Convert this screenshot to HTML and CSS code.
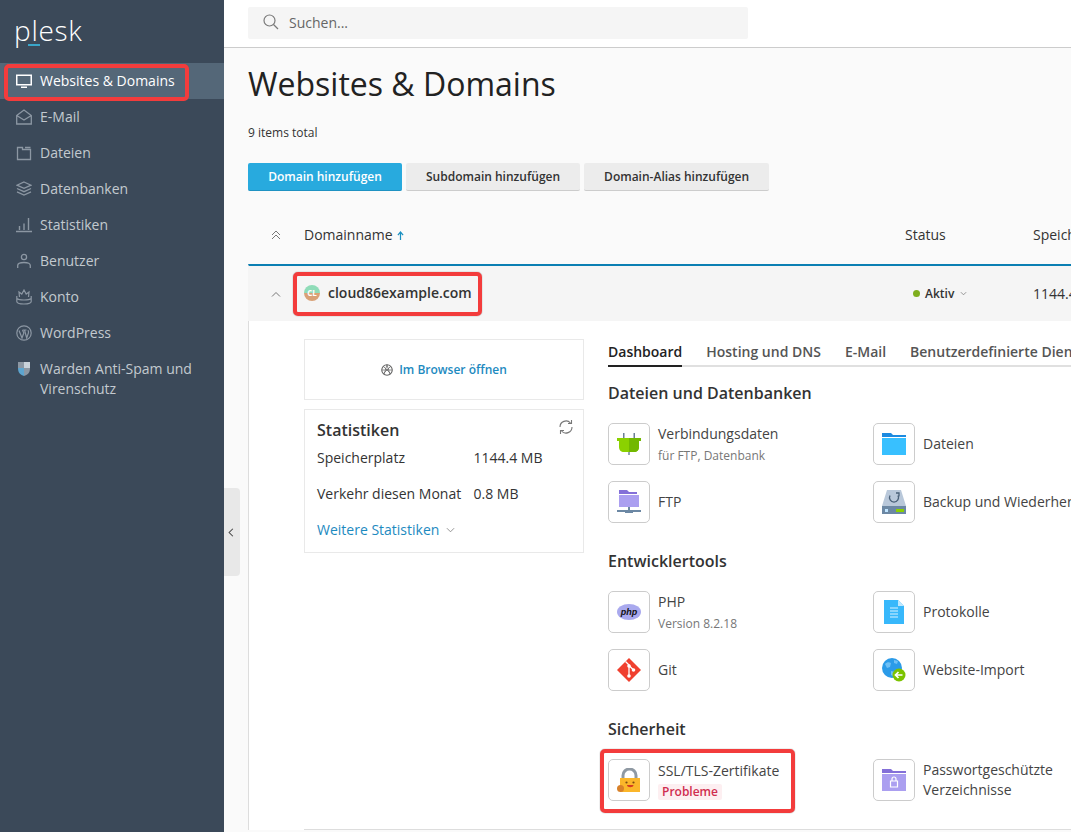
FILE: index.html
```html
<!DOCTYPE html>
<html lang="de">
<head>
<meta charset="utf-8">
<title>Websites &amp; Domains</title>
<link rel="stylesheet" href="styles.css">
</head>
<body>
<div class="app">
  <aside class="sidebar">
    <div class="logo"><span class="logo-p">p</span><span class="logo-l">l</span>esk</div>
    <nav class="nav">
      <a class="nav-item active"><svg class="nav-ico" viewBox="0 0 16 16"><path d="M0 1.500h16v11H0zM1.500 3v8h13V3zM5 13.500h6V15H5z" fill="#fff" fill-rule="evenodd"/></svg><span>Websites &amp; Domains</span></a>
      <a class="nav-item"><svg class="nav-ico" viewBox="0 0 16 16"><path d="M.7 6.500 8 1l7.300 5.500V15H.7zM.7 6.500 8 11l7.300-4.500" fill="none" stroke="#8c97a3" stroke-width="1.300"/></svg><span>E-Mail</span></a>
      <a class="nav-item"><svg class="nav-ico" viewBox="0 0 16 16"><path d="M1.500 2.500h5v2h8v10h-13zM9 2.500h5.500" fill="none" stroke="#8c97a3" stroke-width="1.300"/></svg><span>Dateien</span></a>
      <a class="nav-item"><svg class="nav-ico" viewBox="0 0 16 16"><path d="M8 1l7 3.200-7 3.200-7-3.200zM1 7.500l7 3.200 7-3.200M1 10.800 8 14l7-3.200" fill="none" stroke="#8c97a3" stroke-width="1.300"/></svg><span>Datenbanken</span></a>
      <a class="nav-item"><svg class="nav-ico" viewBox="0 0 16 16"><path d="M0 14.500h16M3.500 13V9M8 13V6.500M12.500 13V1" fill="none" stroke="#8c97a3" stroke-width="1.400"/></svg><span>Statistiken</span></a>
      <a class="nav-item"><svg class="nav-ico" viewBox="0 0 16 16"><circle cx="8" cy="4" r="2.600" fill="none" stroke="#8c97a3" stroke-width="1.300"/><path d="M1.700 15v-2.500c0-2 2-3 6.300-3s6.300 1 6.300 3V15" fill="none" stroke="#8c97a3" stroke-width="1.300"/></svg><span>Benutzer</span></a>
      <a class="nav-item"><svg class="nav-ico" viewBox="0 0 16 16"><path d="M3.500 8 3 3l2.800 2L8 1l2.200 4L13 3l-.5 5M.8 7v5.500C.8 14 3.500 15 8 15s7.200-1 7.200-2.500V7M.8 9.500C3 11.500 13 11.500 15.200 9.500" fill="none" stroke="#8c97a3" stroke-width="1.200"/></svg><span>Konto</span></a>
      <a class="nav-item"><svg class="nav-ico" viewBox="0 0 16 16"><circle cx="8" cy="8" r="7.200" fill="none" stroke="#8c97a3" stroke-width="1.200"/><path d="M3 5.500l3 7.500 1.800-5L6.500 5M6.500 5h4M8.500 5l2.200 8 1.700-5c.4-1 0-2-.4-2.800" fill="none" stroke="#8c97a3" stroke-width="1.200"/></svg><span>WordPress</span></a>
      <a class="nav-item two"><svg class="nav-ico shield" viewBox="0 0 16 16"><path d="M2 1h6v6H2z" fill="#8c97a3"/><path d="M8 1h6v6H8z" fill="#c9d2da"/><path d="M2 7h6v8C4.500 14 2 12 2 7z" fill="#5da5cf"/><path d="M8 7h6c0 5-2.500 7-6 8z" fill="#8c97a3"/></svg><span>Warden Anti-Spam und Virenschutz</span></a>
    </nav>
  </aside>

  <div class="main">
    <header class="topbar">
      <div class="search">
        <svg class="search-ico" viewBox="0 0 16 16"><circle cx="6.500" cy="6.500" r="5.500" fill="none" stroke="#7a7a7a" stroke-width="1.200"/><path d="M10.500 10.500 15 15" stroke="#7a7a7a" stroke-width="1.300"/></svg>
        <span>Suchen...</span>
      </div>
    </header>

    <button class="collapse" type="button" aria-label="Einklappen"><svg viewBox="0 0 8 12" width="6" height="9"><path d="M6.500 1 1.500 6l5 5" fill="none" stroke="#444" stroke-width="1.400"/></svg></button>

    <main class="page">
      <h1 class="title">Websites &amp; Domains</h1>
      <p class="count">9 items total</p>
      <div class="actions">
        <button class="btn primary" type="button">Domain hinzufügen</button>
        <button class="btn" type="button">Subdomain hinzufügen</button>
        <button class="btn" type="button">Domain-Alias hinzufügen</button>
      </div>

      <div class="thead">
        <span class="col-toggle"><svg viewBox="0 0 10 10" width="10" height="10"><path d="M1 5l4-4 4 4M1 9l4-4 4 4" fill="none" stroke="#777" stroke-width="1"/></svg></span>
        <span class="col-name">Domainname <svg class="sort" viewBox="0 0 8 10" width="7" height="9"><path d="M4 10V2M1 4.500 4 1l3 3.500" fill="none" stroke="#1a8fc0" stroke-width="1.400"/></svg></span>
        <span class="col-status">Status</span>
        <span class="col-size">Speicherplatz</span>
      </div>

      <div class="domain">
        <div class="drow">
          <span class="col-toggle"><svg viewBox="0 0 10 6" width="10" height="6"><path d="M1 5.500 5 1.500l4 4" fill="none" stroke="#777" stroke-width="1"/></svg></span>
          <span class="col-name dname"><span class="favicon">CL</span><b>cloud86example.com</b></span>
          <span class="col-status active-status"><i class="dot"></i><b>Aktiv</b><svg viewBox="0 0 8 5" width="7" height="5"><path d="M1 1l3 3 3-3" fill="none" stroke="#888" stroke-width="1"/></svg></span>
          <span class="col-size row-size">1144.4 MB</span>
        </div>

        <div class="dbody">
          <div class="left">
            <div class="card open"><svg viewBox="0 0 16 16" width="12" height="12"><circle cx="8" cy="8" r="7" fill="none" stroke="#666" stroke-width="1.500"/><path d="M3 3l10 10M13 3 3 13M8 1 4 14M8 1l4 13M1.500 8h13" stroke="#666" stroke-width="1"/></svg><a>Im Browser öffnen</a></div>
            <div class="card stats">
              <svg class="refresh" viewBox="0 0 16 16" width="16" height="16"><path d="M2 8a6 6 0 0 1 10.500-4M14 8a6 6 0 0 1-10.500 4" fill="none" stroke="#777" stroke-width="1.100"/><path d="M13.500 1v3.500H10M2.500 15v-3.500H6" fill="none" stroke="#777" stroke-width="1.100"/></svg>
              <h3>Statistiken</h3>
              <dl class="stat-list">
                <dt>Speicherplatz</dt><dd>1144.4 MB</dd>
                <dt>Verkehr diesen Monat</dt><dd>0.8 MB</dd>
              </dl>
              <a class="more">Weitere Statistiken <svg viewBox="0 0 10 6" width="9" height="6"><path d="M1 1l4 4 4-4" fill="none" stroke="#888" stroke-width="1"/></svg></a>
            </div>
          </div>

          <div class="right">
            <div class="tabs">
              <span class="tab on">Dashboard</span>
              <span class="tab">Hosting und DNS</span>
              <span class="tab">E-Mail</span>
              <span class="tab">Benutzerdefinierte Dienste</span>
            </div>

            <h2 class="sec first">Dateien und Datenbanken</h2>
            <div class="grid">
              <div class="tool"><span class="ibox"><svg viewBox="0 0 24 24" width="24" height="24"><path d="M6 1h1.500v5H6zM16.500 1H18v5h-1.500zM11.300 19h1.400v4h-1.400z" fill="#6c7f96"/><path d="M0 6h24v3H22v6c0 3-2 5-5 5H7c-3 0-5-2-5-5V9H0z" fill="#8bd100"/><path d="M12 6h12v3h-2v6c0 3-2 5-5 5h-5z" fill="#72b800"/></svg></span><div class="tlabel sub"><span>Verbindungsdaten</span><small>für FTP, Datenbank</small></div></div>
              <div class="tool"><span class="ibox"><svg viewBox="0 0 24 24" width="24" height="24"><path d="M0 1h9l2 2h13v2H0z" fill="#1c8ae0"/><path d="M0 6h24v17H0z" fill="#38c0ff"/></svg></span><div class="tlabel"><span>Dateien</span></div></div>
              <div class="tool"><span class="ibox"><svg viewBox="0 0 24 24" width="24" height="24"><path d="M2 0h8l2 2h8v2H2z" fill="#8470d8"/><path d="M2 5h20v12H2z" fill="#ab9ff0"/><path d="M11 17h2v3h-2zM0 20h24v2H0z" fill="#6c88a4"/><path d="M8 20h8v3H8z" fill="#6c88a4"/></svg></span><div class="tlabel"><span>FTP</span></div></div>
              <div class="tool"><span class="ibox"><svg viewBox="0 0 24 24" width="24" height="24"><path d="M5 0h14l5 16H0z" fill="#b9c8da"/><path d="M0 16h24v8H0z" fill="#6c88a4"/><path d="M3 19h3v3H3z" fill="#bfe4ff"/><path d="M14 19h8v3h-8z" fill="#8bd100"/><path d="M8 5.500a4.500 4.500 0 1 0 8 0M14 3h3v3.500" fill="none" stroke="#4a6078" stroke-width="1.300"/></svg></span><div class="tlabel"><span class="nowrap">Backup und Wiederherstellung</span></div></div>
            </div>

            <h2 class="sec">Entwicklertools</h2>
            <div class="grid">
              <div class="tool"><span class="ibox"><svg class="php" viewBox="0 0 24 16" width="24" height="16"><ellipse cx="12" cy="8" rx="12" ry="8" fill="#a9a9ee"/><text x="12" y="11" text-anchor="middle">php</text></svg></span><div class="tlabel sub"><span>PHP</span><small>Version 8.2.18</small></div></div>
              <div class="tool"><span class="ibox"><svg viewBox="0 0 20 24" width="20" height="24"><path d="M0 0h14l6 6v18H0z" fill="#38b8fb"/><path d="M14 0l6 6h-6z" fill="#bfe8ff"/><path d="M6 8h8M6 11h8M6 14h8M6 17h8" stroke="#d8f2ff" stroke-width="1"/></svg></span><div class="tlabel"><span>Protokolle</span></div></div>
              <div class="tool"><span class="ibox"><svg viewBox="0 0 24 24" width="24" height="24"><path d="M12 0 24 12 12 24 0 12z" fill="#f0402f"/><path d="M8.500 3.500l4 4M12 7v11M12 7.500l4.500 4.500" stroke="#fff" stroke-width="1.300"/><circle cx="12" cy="8" r="1.800" fill="#fff"/><circle cx="12" cy="18" r="1.800" fill="#fff"/><circle cx="16.500" cy="12" r="1.800" fill="#fff"/></svg></span><div class="tlabel"><span>Git</span></div></div>
              <div class="tool"><span class="ibox"><svg viewBox="0 0 24 24" width="24" height="24"><circle cx="10" cy="10" r="10" fill="#2b9be8"/><path d="M3 6c2-2 4-2 6-1l-1 4-3 1zM12 2l4 1-1 3-3-1zM9 13l4 1-2 4-2-1z" fill="#6fc0f5"/><circle cx="17" cy="17" r="6.500" fill="#7cc300"/><path d="M13.500 17h7M16.500 14l-3 3 3 3" fill="none" stroke="#fff" stroke-width="1.700"/></svg></span><div class="tlabel"><span>Website-Import</span></div></div>
            </div>

            <h2 class="sec">Sicherheit</h2>
            <div class="grid">
              <div class="tool"><span class="ibox"><svg viewBox="0 0 24 25" width="24" height="25"><path d="M6 11V7.500a6.500 6.500 0 0 1 13 0V11" fill="none" stroke="#8f99a3" stroke-width="3"/><path d="M3 10h20v14H3z" fill="#fbb62a"/><circle cx="9.500" cy="14.500" r="1.100" fill="#7a4a10"/><circle cx="16.500" cy="14.500" r="1.100" fill="#7a4a10"/><path d="M10 17h6.500c0 3-6.500 3-6.500 0z" fill="#d43a22"/><circle cx="3.500" cy="20.500" r="3.500" fill="#d8812a"/></svg></span><div class="tlabel"><span>SSL/TLS-Zertifikate</span><em class="badge">Probleme</em></div></div>
              <div class="tool"><span class="ibox"><svg viewBox="0 1 24 22" width="24" height="22"><path d="M0 1h9l2 2h13v2H0z" fill="#8470d8"/><path d="M0 6h24v17H0z" fill="#ab9ff0"/><path d="M8.500 13h7v6h-7z" fill="none" stroke="#fff" stroke-width="1.200"/><path d="M10 13v-2a2 2 0 0 1 4 0v2" fill="none" stroke="#fff" stroke-width="1.200"/></svg></span><div class="tlabel"><span>Passwortgeschützte<br>Verzeichnisse</span></div></div>
            </div>
            <div class="rule"></div>
          </div>
        </div>
      </div>
    </main>
  </div>

  <div class="mark mark-nav"></div>
  <div class="mark mark-domain"></div>
  <div class="mark mark-ssl"></div>
</div>
</body>
</html>
```

FILE: styles.css
```css
* { box-sizing: border-box; }
html, body { margin: 0; padding: 0; height: 100%; overflow: hidden; }
body { font-family: "Open Sans", "Liberation Sans", sans-serif; font-size: 14px; color: #333; background: #fafafa; }
.app { position: relative; display: flex; width: 1071px; height: 832px; overflow: hidden; }

/* sidebar */
.sidebar { width: 224px; flex: none; background: #3b4959; color: #fff; }
.logo { height: 63px; padding: 10px 0 0 14px; font-weight: 300; font-size: 28px; line-height: 40px; letter-spacing: 0.7px; color: #fff; }
.logo-l { position: relative; }
.logo-l::after { content: ""; position: absolute; left: -3px; top: 33px; width: 12px; height: 2px; background: #3aa6c9; }
.nav { display: flex; flex-direction: column; }
.nav-item { display: flex; align-items: center; gap: 8px; height: 36px; padding-left: 16px; color: #c3c9cf; line-height: 20px; }
.nav-item.active { background: #546778; color: #fff; }
.nav-item.two { height: auto; align-items: flex-start; padding-top: 8px; padding-right: 20px; }
.nav-ico { width: 16px; height: 16px; flex: none; }
.nav-item.two .nav-ico { margin-top: 2px; }

/* main */
.main { position: relative; flex: 1; min-width: 0; }
.topbar { height: 48px; background: #fff; border-bottom: 1px solid #ccc; padding: 7px 0 0 24px; }
.search { display: flex; align-items: center; gap: 10px; width: 500px; height: 32px; padding: 0 0 2px 15px; background: #f5f5f5; border-radius: 2px; color: #666; }
.search-ico { width: 16px; height: 16px; }
.collapse { position: absolute; left: 0; top: 488px; width: 16px; height: 88px; padding: 0 2px 0 0; border: 0; background: #e8e8e8; border-radius: 0 4px 4px 0; display: flex; align-items: center; justify-content: center; }
.page { padding: 0 0 0 24px; width: 1000px; }
.title { margin: 0; padding-top: 16px; font-size: 32px; font-weight: 400; line-height: 40px; color: #222; }
.count { margin: 0; padding-top: 21px; font-size: 12px; line-height: 16px; color: #333; }
.actions { display: flex; gap: 4px; margin-top: 22px; }
.btn { height: 28px; padding: 0 20px; border: 0; border-bottom: 1px solid #ccc; border-radius: 2px; background: #ececec; font: 600 12px/27px "Open Sans", sans-serif; color: #333; }
.btn.primary { width: 154px; padding: 0; background: #28aade; border-bottom-color: #1f92c2; color: #fff; }

.thead, .drow { display: flex; align-items: center; }
.thead { height: 73px; padding-top: 14px; }
.col-toggle { width: 56px; flex: none; padding-left: 23px; display: flex; }
.col-name { width: 601px; flex: none; }
.col-status { width: 128px; flex: none; }
.col-size { flex: none; }
.sort { margin-left: 1px; }

.domain { border-top: 2px solid #0b7fb3; border-left: 1px solid #ddd; background: #fff; }
.drow { height: 55px; background: #f5f5f5; margin-left: -1px; }
.dname { display: flex; align-items: center; gap: 8px; font-size: 14px; padding-bottom: 2px; }
.dname b { font-weight: 600; color: #333; }
.favicon { width: 16px; height: 16px; border-radius: 50%; background: linear-gradient(#8fdcb8 50%, #d9a176 50%); color: #fff; font-size: 8px; font-weight: 700; line-height: 16px; text-align: center; }
.active-status { display: flex; align-items: center; gap: 4px; padding-left: 8px; font-size: 12px; }
.active-status b { font-weight: 600; margin-right: 2px; }
.dot { width: 7px; height: 7px; margin-right: 1px; border-radius: 50%; background: #7fae1e; }

.dbody { display: flex; padding: 18px 0 0 55px; }
.left { width: 280px; flex: none; display: flex; flex-direction: column; gap: 9px; }
.card { border: 1px solid #e9e9e9; background: #fff; }
.open { display: flex; align-items: center; justify-content: center; gap: 6px; height: 61px; font-size: 12px; font-weight: 600; }
.open a, .more { color: #1d8abf; }
.stats { position: relative; height: 144px; padding: 9px 12px 0; }
.refresh { position: absolute; right: 9px; top: 9px; }
.stats h3 { margin: 0; font-size: 16px; font-weight: 600; line-height: 22px; color: #333; }
.stat-list { display: grid; grid-template-columns: 156.500px 1fr; row-gap: 16px; margin: 7px 0 16px; line-height: 20px; }
.stat-list dt, .stat-list dd { margin: 0; white-space: nowrap; }
.more { line-height: 20px; }
.more svg { margin-left: 3px; vertical-align: 2px; }

.right { margin-left: 24px; flex: 1; min-width: 0; }
.tabs { display: flex; gap: 24px; height: 28px; border-bottom: 2px solid #e0e0e0; line-height: 26px; white-space: nowrap; }
.tab { height: 28px; font-weight: 600; color: #555; }
.tab.on { color: #222; border-bottom: 2px solid #222; }
.sec { margin: 27px 0 19px; font-size: 16px; font-weight: 600; line-height: 22px; color: #333; }
.sec.first { margin-top: 15px; }
.grid { display: grid; grid-template-columns: 265px 265px; row-gap: 16px; }
.tool { display: flex; align-items: center; gap: 8px; height: 42px; }
.ibox { width: 42px; height: 42px; flex: none; display: flex; align-items: center; justify-content: center; border: 1px solid #ccc; border-radius: 5px; background: #fff; }
.tlabel { display: flex; flex-direction: column; line-height: 20px; color: #444; }
.tlabel.sub { padding-top: 2px; }
.tlabel small { font-size: 12px; line-height: 20px; margin-top: 2px; color: #777; }
.nowrap { white-space: nowrap; }
.badge { align-self: flex-start; margin-top: 3px; padding: 0 4px; height: 16px; font-style: normal; font-size: 12px; font-weight: 600; line-height: 16px; color: #d02d4f; background: #fdeff1; border-radius: 2px; }
.php text { font: italic 700 9px "Liberation Sans", sans-serif; fill: #111; }
.rule { height: 1px; margin: 28px 0 0 -304px; background: #ddd; }

/* red annotation frames laid over the screenshot */
.mark { position: absolute; border: 4px solid #f33c3c; border-radius: 5px; box-shadow: 0 0 1px #555; pointer-events: none; }
.mark-nav { left: 4px; top: 64px; width: 185px; height: 37px; }
.mark-domain { left: 293px; top: 272px; width: 189px; height: 44px; }
.mark-ssl { left: 600px; top: 749px; width: 195px; height: 64px; }
```
